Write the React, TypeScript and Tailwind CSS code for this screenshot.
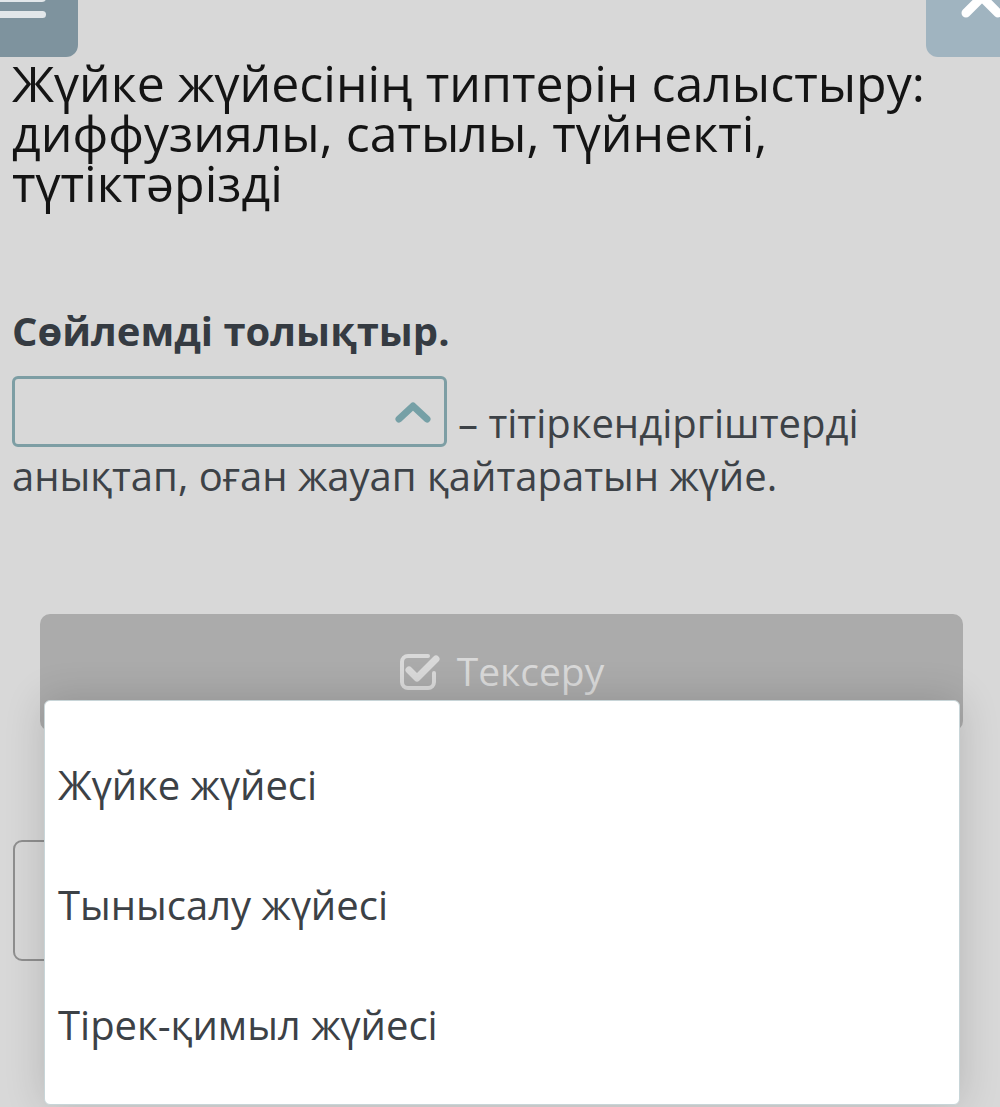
import React from "react";

function CheckSquare() {
  return (
    <svg width="42" height="38" viewBox="0 0 42 38" fill="none">
      <path
        d="M29 4 H9 a6 6 0 0 0 -6 6 v20 a6 6 0 0 0 6 6 h20 a6 6 0 0 0 6 -6 v-9"
        stroke="#d9d9d9"
        strokeWidth="4"
        strokeLinecap="round"
      />
      <path
        d="M10 18 L18 26 L37 7"
        stroke="#d9d9d9"
        strokeWidth="7"
        strokeLinecap="round"
        strokeLinejoin="round"
      />
    </svg>
  );
}

export default function App() {
  return (
    <div className="relative h-[1107px] w-[1000px] overflow-hidden bg-[#d8d8d8] font-['Open_Sans',sans-serif]">
      {/* top bar */}
      <div className="flex h-[57px] justify-between">
        <div className="relative h-[57px] w-[78px] overflow-hidden rounded-br-[12px] bg-[#7e939e]">
          <div className="absolute left-0 top-[-6px] h-[8px] w-[46px] rounded-r-[4px] bg-[#e2e7ea]" />
          <div className="absolute left-0 top-[11px] h-[7px] w-[46px] rounded-r-[4px] bg-[#e2e7ea]" />
        </div>
        <div className="relative h-[57px] w-[74px] overflow-hidden rounded-bl-[12px] bg-[#a0b4c0]">
          <svg className="absolute left-0 top-0" width="74" height="57" viewBox="0 0 74 57">
            <path d="M40 13 L56 -3 L72 13" stroke="#ffffff" strokeWidth="9" fill="none" strokeLinecap="round" strokeLinejoin="round" />
          </svg>
        </div>
      </div>

      <div className="px-[12px]">
        <h1 className="mt-[1px] text-[50px] font-normal leading-[50px] text-[#141414]">
          Жүйке жүйесінің типтерін салыстыру: диффузиялы, сатылы, түйнекті, түтіктәрізді
        </h1>

        <div className="mt-[99px] text-[40px] font-bold leading-[48px] text-[#353b42]">
          Сөйлемді толықтыр.
        </div>

        <div className="mt-[21px] flex items-end gap-[11px]">
          <div className="flex h-[71px] w-[435px] items-center justify-end rounded-[6px] border-[3px] border-[#7d9ea4] pr-[13px]">
            <svg width="36" height="22" viewBox="0 0 36 22">
              <path d="M4 18 L18 5 L32 18" stroke="#76a0a6" strokeWidth="7" fill="none" strokeLinecap="round" strokeLinejoin="round" />
            </svg>
          </div>
          <span className="text-[40px] leading-[48px] text-[#3d4247]">– тітіркендіргіштерді</span>
        </div>
        <div className="mt-[5px] text-[40px] leading-[48px] text-[#3d4247]">
          анықтап, оған жауап қайтаратын жүйе.
        </div>
      </div>

      <div className="pl-[40px] pr-[37px] pt-[114px]">
        <div className="flex h-[117px] items-center justify-center gap-[16px] rounded-[10px] bg-[#ababab] pb-[4px]">
          <CheckSquare />
          <span className="text-[39px] leading-[48px] text-[#d9d9d9]">Тексеру</span>
        </div>
      </div>

      <div className="ml-[13px] mt-[109px] h-[121px] w-[900px] rounded-[9px] border-2 border-[#8f8f8f]" />

      {/* dropdown menu */}
      <div className="absolute left-[44px] top-[700px] flex h-[405px] w-[916px] flex-col rounded-[6px] border border-[#c8d5d8] bg-white pt-[24px] shadow-[0_0_40px_rgba(0,0,0,0.16)]">
        {["Жүйке жүйесі", "Тынысалу жүйесі", "Тірек-қимыл жүйесі"].map((o) => (
          <div key={o} className="flex h-[120px] items-center pl-[13px] text-[40px] leading-[48px] text-[#3c4146]">
            {o}
          </div>
        ))}
      </div>
    </div>
  );
}
